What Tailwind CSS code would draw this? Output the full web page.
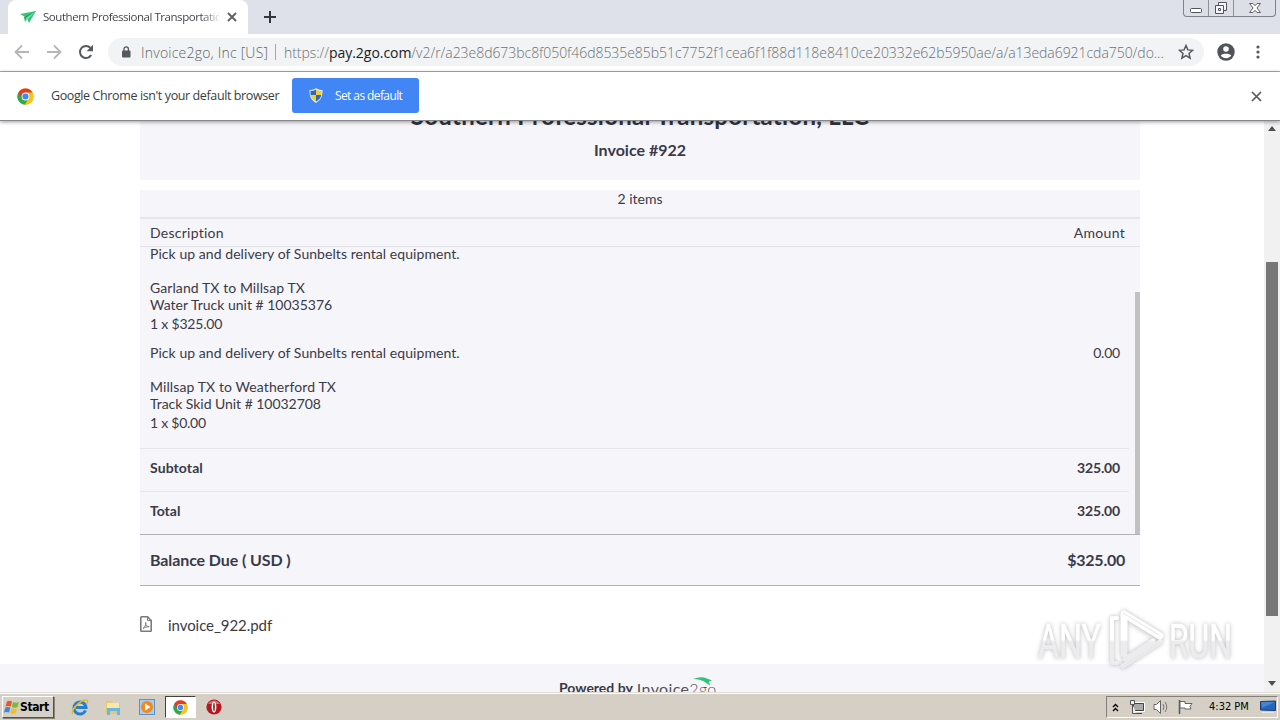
<!DOCTYPE html>
<html lang="en">
<head>
<meta charset="utf-8">
<title>Southern Professional Transportation</title>
<script src="https://cdn.jsdelivr.net/npm/@tailwindcss/browser@4"></script>
</head>
<body class="w-[1280px] h-[720px] overflow-hidden bg-white font-['Open_Sans',sans-serif] text-[#3c3d42]">
<svg class="hidden">
  <symbol id="chrome" viewBox="0 0 48 48">
    <circle cx="24" cy="24" r="23" fill="#fbc116"/>
    <path d="M24 24 4 12.6A23 23 0 0 0 22 47L33 29z" fill="#2da94f"/>
    <path d="M24 13h20A23 23 0 0 1 23 47L34 29z" fill="#fbc116"/>
    <path d="M4 12.5A23 23 0 0 1 44 13H24L14 29z" fill="#e33b2e"/>
    <circle cx="24" cy="24" r="11" fill="#fff"/><circle cx="24" cy="24" r="8.6" fill="#4587f3"/>
  </symbol>
</svg>
<div class="relative flex h-full flex-col">

  <!-- Tab strip -->
  <div class="flex h-[34px] shrink-0 justify-between bg-[#dee1e9]">
    <div class="flex">
      <div class="ml-2 flex h-[34px] w-[240px] items-center rounded-t-lg bg-white pl-3">
        <svg class="mr-[7px] h-4 w-4 shrink-0" viewBox="0 0 16 16"><path d="M0 5 16 2 9 14 7 9z" fill="#2fc878"/><path d="M16 2 4 8l1 5 2-4z" fill="#1fa862"/><path d="M16 2 6 9l-1 4 3-3z" fill="#7be0ab"/></svg>
        <div class="w-[176px] overflow-hidden whitespace-nowrap bg-linear-to-r from-[#3c4043] from-90% to-[#3c404322] bg-clip-text text-[11.5px] leading-[18px] tracking-[-0.46px] text-transparent">Southern Professional Transportatio</div>
        <svg class="ml-2 h-2.5 w-2.5 shrink-0" viewBox="0 0 10 10"><path d="M1 1l8 8M9 1L1 9" stroke="#5b5e63" stroke-width="1.8"/></svg>
      </div>
      <svg class="ml-4 mt-[11px] h-3 w-3" viewBox="0 0 12 12"><path d="M6 0v12M0 6h12" stroke="#33363b" stroke-width="2"/></svg>
    </div>
    <div class="mr-[4px] flex h-[17px] w-[93px] rounded-b-[4px] border border-t-0 border-[#7d828b] bg-[#dcdfe6] text-[#50545c]">
      <div class="flex w-[25px] justify-center border-r border-[#8d929b]"><svg class="h-4 w-4" viewBox="0 0 16 16"><rect x="2.500" y="8.500" width="11" height="4" rx="1" fill="#fff" stroke="#50545c"/></svg></div>
      <div class="flex w-[25px] justify-center border-r border-[#8d929b]"><svg class="h-4 w-4" viewBox="0 0 16 16"><g fill="#f4f5f8" stroke="#50545c"><path d="M5.500 2.500h8v8h-8z"/><path d="M2.500 5.500h8v8h-8z"/><path d="M5.500 8.500h2v2h-2z"/></g></svg></div>
      <div class="flex flex-1 justify-center"><svg class="h-4 w-4" viewBox="0 0 16 16"><path d="M2.500 3.500h3.500l2 2.200 2-2.200h3.500l-3.500 4.500 3.500 4.500H10L8 10.300 6 12.500H2.500L6 8z" fill="#fff" stroke="#60646c"/></svg></div>
    </div>
  </div>

  <!-- Toolbar -->
  <div class="flex h-[38px] shrink-0 items-center border-b border-[#a9abae] bg-white pb-px">
    <svg class="ml-[14px] h-4 w-4" viewBox="0 0 16 16"><path d="M15 8H2M8 1.500 1.500 8 8 14.500" fill="none" stroke="#b5b6b8" stroke-width="1.800"/></svg>
    <svg class="ml-4 h-4 w-4" viewBox="0 0 16 16"><path d="M1 8h13M8 1.500 14.500 8 8 14.500" fill="none" stroke="#b5b6b8" stroke-width="1.800"/></svg>
    <svg class="ml-4 h-4 w-4" viewBox="0 0 16 16"><path d="M13.200 11A6 6 0 1 1 12.500 4" fill="none" stroke="#56595e" stroke-width="2"/><path d="M15 .8v6.400H8.600z" fill="#56595e"/></svg>
    <div class="ml-[14px] flex h-7 w-[1096px] items-center whitespace-nowrap rounded-full bg-[#f1f3f4] text-[14px] text-[#6d7176]">
      <svg class="ml-[13px] h-3 w-[10px] shrink-0" viewBox="0 0 10 12"><rect x="1" y="4.500" width="8.500" height="7" rx="1" fill="#55585d"/><path d="M3 5V3a2.200 2.200 0 0 1 4.400 0v2" fill="none" stroke="#55585d" stroke-width="1.300"/></svg>
      <div class="ml-[10px] w-[128px] text-[#5f6368]"><span class="font-light tracking-[0.22px]">Invoice2go, Inc [US]</span></div>
      <div class="ml-[6px] mr-2 h-4 w-px bg-[#a4a7ab]"></div>
      <div class="w-[888px] font-light"><span class="tracking-[-0.045px]">https://<span class="font-normal text-[#202124]">pay.2go.com</span>/v2/r/a23e8d673bc8f050f46d8535e85b51c7752f1cea6f1f88d118e8410ce20332e62b5950ae/a/a13eda6921cda750/do...</span></div>
      <svg class="ml-[6px] h-4 w-4 shrink-0" viewBox="0 0 16 16"><path d="M8 1.500l1.900 4.400 4.700.4-3.600 3.100 1.100 4.700L8 11.600l-4.100 2.500L5 9.400 1.400 6.300l4.700-.4z" fill="none" stroke="#55585d" stroke-width="1.500"/></svg>
    </div>
    <svg class="ml-[13px] h-[18px] w-[18px]" viewBox="0 0 18 18"><circle cx="9" cy="9" r="8.700" fill="#505358"/><circle cx="9" cy="6" r="2.800" fill="#fff"/><path d="M3.800 12.600c1.200-2.400 9.200-2.400 10.400 0a6.300 6.300 0 0 1-10.400 0z" fill="#fff"/></svg>
    <svg class="ml-[21px] h-[14px] w-1" viewBox="0 0 4 14" fill="#55585d"><circle cx="2" cy="2" r="1.600"/><circle cx="2" cy="7" r="1.600"/><circle cx="2" cy="12" r="1.600"/></svg>
  </div>

  <!-- Default browser prompt -->
  <div class="z-10 flex h-[49px] shrink-0 items-center border-b border-[#85878a] bg-white pb-px shadow-[0_1px_4px_rgba(0,0,0,0.4)]">
    <svg class="ml-[17px] mt-px h-[17px] w-[17px]"><use href="#chrome"/></svg>
    <div class="ml-[17px] w-[241px] whitespace-nowrap pt-0.5 text-[12.5px] text-[#3a3d42]"><span class="tracking-[-0.39px]">Google Chrome isn't your default browser</span></div>
    <div class="flex h-[35px] w-[127px] items-center rounded-[3px] bg-[#4285f4] pl-[17px] text-[12px] text-white">
      <svg class="h-[15px] w-[14px]" viewBox="0 0 14 15"><path d="M7 0c2 1.500 4 2 6.500 2 .3 6-1.500 10-6.500 13C2 12 .2 8 .5 2 3 2 5 1.500 7 0z" fill="#e3e7ed"/><path d="M7 1.500V7H1.600L1.500 3Q5 3 7 1.500zM7 7h5.300Q11.500 11 7 13.600z" fill="#2769c4"/><path d="M7 1.500Q9 3 12.500 3l-.2 4H7zM7 7v6.600Q2.500 11 1.600 7z" fill="#f6cd2b"/></svg>
      <span class="ml-3 tracking-[-0.6px]">Set as default</span>
    </div>
    <svg class="ml-auto mr-[18px] mt-px h-[11px] w-[11px]" viewBox="0 0 11 11"><path d="M1 1l9 9M10 1l-9 9" stroke="#55585d" stroke-width="1.700"/></svg>
  </div>

  <!-- Page -->
  <div class="flex h-[571px] shrink-0 overflow-hidden">
    <main class="flex w-[1264px] flex-col overflow-hidden font-['Lato',sans-serif] text-[14px] text-[#3a3a48]">
      <section class="ml-[140px] flex h-[59px] w-[1000px] shrink-0 flex-col items-center justify-end overflow-hidden bg-[#f6f5fa] pb-5">
        <h1 class="shrink-0 whitespace-nowrap text-[24px] font-bold leading-[30px] tracking-[0.25px] text-[#33333f]">Southern Professional Transportation, LLC</h1>
        <h2 class="mt-[9px] shrink-0 text-[16px] font-bold leading-5">Invoice #922</h2>
      </section>
      <section class="ml-[140px] mt-[10px] flex w-[1000px] shrink-0 flex-col bg-[#f6f5fa]">
        <div class="h-[29px] border-b-2 border-[#e6e5ea] text-center leading-[18px]"><span>2 items</span></div>
        <div class="flex h-[28px] items-center justify-between border-b border-[#e2e1e6] pl-[10px] pr-[15px]"><span class="tracking-[0.26px]">Description</span><span class="tracking-[0.3px]">Amount</span></div>
        <div class="flex h-[287px]">
          <div class="w-[989px]">
            <div class="-mt-[2px] h-[99px] pl-[10px] pr-[9px] leading-[17px]">
              <p class="tracking-[0.06px]">Pick up and delivery of Sunbelts rental equipment.</p><p class="mt-[17px] tracking-[0.08px]">Garland TX to Millsap TX</p><p>Water Truck unit # 10035376</p><p class="mt-[2px] tracking-[-0.2px]">1 x $325.00</p>
            </div>
            <div class="flex h-[105px] justify-between border-b border-[#e6e5ea] pl-[10px] pr-[9px] leading-[17px]">
              <div><p class="tracking-[0.06px]">Pick up and delivery of Sunbelts rental equipment.</p><p class="mt-[17px] tracking-[0.1px]">Millsap TX to Weatherford TX</p><p class="tracking-[-0.04px]">Track Skid Unit # 10032708</p><p class="mt-[2px] tracking-[-0.24px]">1 x $0.00</p></div>
              <span class="tracking-[-0.2px]">0.00</span>
            </div>
            <div class="flex h-[43px] items-center justify-between border-b border-[#e6e5ea] pb-[5px] pl-[10px] pr-[9px] font-bold"><span class="tracking-[0.1px]">Subtotal</span><span class="tracking-[-0.15px]">325.00</span></div>
            <div class="flex h-[42px] items-center justify-between pb-[5px] pl-[10px] pr-[9px] font-bold"><span>Total</span><span class="tracking-[-0.15px]">325.00</span></div>
          </div>
          <div class="ml-auto mt-[45px] w-[5px] bg-[#c1c1c3]"></div>
        </div>
        <div class="flex h-[52px] items-center justify-between border-y border-[#b2b2b8] pl-[10px] pr-[15px] text-[16px] font-bold"><span class="tracking-[-0.1px]">Balance Due ( USD )</span><span class="tracking-[-0.25px]">$325.00</span></div>
      </section>
      <div class="ml-[140px] flex h-[78px] w-[1000px] shrink-0 items-center text-[15px]">
        <svg class="mb-[3px] mr-4 h-4 w-3" viewBox="0 0 12 16" fill="none" stroke="#7b7b7f"><path d="M1.500.8h6l3.700 3.700v10q0 .8-.8.8H1.500q-.7 0-.7-.8v-13q0-.7.7-.7z" stroke-width="1.600"/><path d="M7.500 1v3.500H11M3 12.500c1.500-1 2.700-3 2.700-6 0 3 1.300 4.200 3.500 4.200-2 0-4.200.4-6.200 1.800z"/></svg>
        <span class="tracking-[-0.06px]">invoice_922.pdf</span>
      </div>
      <footer class="flex h-[60px] w-full shrink-0 bg-[#f6f5fa] pl-[559px] pt-[13px] text-[14px]">
        <span class="font-bold">Powered by</span>
        <span class="relative ml-1 mt-px self-start text-[16px] leading-[22px] tracking-[0.35px] text-[#51525d]">Invoice<span class="font-light">2go</span>
          <svg class="absolute -top-px right-[4px] h-[9px] w-[20px]" viewBox="0 0 20 9"><path d="M0 2Q8-1 14 1.500l5 2-3 1 1 4-6-4Q7 2 0 2z" fill="#2fc47c"/></svg></span>
      </footer>
    </main>
    <div class="flex w-4 flex-col items-center bg-[#f1f1f1]">
      <svg class="mt-[5px] h-[5px] w-[8px]" viewBox="0 0 8 5"><path d="M4 0l4 5H0z" fill="#505050"/></svg>
      <div class="mt-[131px] h-[354px] w-3 bg-[#777]"></div>
      <svg class="mt-[65px] h-[5px] w-[8px]" viewBox="0 0 8 5"><path d="M4 5l4-5H0z" fill="#505050"/></svg>
    </div>
  </div>

  <!-- Taskbar -->
  <div class="flex h-7 shrink-0 items-center border-t border-[#dedbd5] bg-[#d5cfc6] pt-px shadow-[inset_0_1px_0_#fff] font-['DejaVu_Sans_Condensed','DejaVu_Sans',sans-serif]">
    <div class="ml-[2px] flex h-[22px] w-[52px] items-center border border-b-[#55524e] border-l-white border-r-[#55524e] border-t-white bg-[#d5cfc6] pl-px text-[12px] font-bold text-black shadow-[1px_1px_0_#88847c]">
      <svg class="h-4 w-4" viewBox="0 0 16 16"><path d="M3 2.500Q5.500 1 8 2.500L6.700 7.500Q4 6.300 1.500 7.500z" fill="#e8562c"/><path d="M9 3q3 1.500 6 0l-1.500 5q-3 1.300-5.700 0z" fill="#7bbb3c"/><path d="M1.200 8.700q2.500-1.200 5.200 0L5 13.500q-2.500-1.200-5 0z" fill="#3f87d9"/><path d="M7.500 9.200q2.700 1.300 5.600 0l-1.500 5q-3 1.200-5.500 0z" fill="#f6bd2b"/></svg><span class="tracking-[-0.4px]">Start</span>
    </div>
    <svg class="ml-[17px] h-[18px] w-[18px]" viewBox="0 0 18 18"><path d="M14.500 12.500A6 6 0 1 1 15 9.500H5" fill="none" stroke="#2380d0" stroke-width="3"/><path d="M2 16C-1 12 10 1 16 2q1.500 1-.5 4" fill="none" stroke="#e8b92b" stroke-width="1.500"/></svg>
    <svg class="ml-[15px] h-[18px] w-[18px]" viewBox="0 0 18 18"><path d="M2 3h6l1 2h7v11H2z" fill="#e8c86a"/><path d="M3 5h12v7H3z" fill="#f9e9a8"/><path d="M3 10h13v7h-3v-4H6v4H3z" fill="#66b5e8"/></svg>
    <svg class="ml-[16px] h-[18px] w-[18px]" viewBox="0 0 18 18"><rect x="1.500" y="1.500" width="15" height="15" fill="#a9cbee" stroke="#5c92cb"/><circle cx="9" cy="9" r="6" fill="#f08a1d"/><path d="M7 5.500v7l5.500-3.500z" fill="#fff"/></svg>
    <div class="ml-[9px] flex h-[22px] w-[31px] items-center justify-center border border-b-white border-l-[#44423e] border-r-white border-t-[#44423e] bg-white"><svg class="h-[15px] w-[15px]"><use href="#chrome"/></svg></div>
    <svg class="ml-[10px] h-4 w-4" viewBox="0 0 16 16"><circle cx="8" cy="8" r="7.600" fill="#b5171e"/><path d="M2 5a7 7 0 0 1 12 0z" fill="#dd6a6e"/><ellipse cx="8" cy="8" rx="2.400" ry="5.600" fill="#fff"/><ellipse cx="8" cy="8" rx=".8" ry="4.200" fill="#8a0f14"/></svg>
    <div class="ml-auto mr-[2px] flex h-[22px] w-[172px] items-center border border-b-white border-l-[#85817a] border-r-white border-t-[#85817a] text-[11px] text-black">
      <svg class="ml-[5px] h-[9px] w-[7px]" viewBox="0 0 7 9"><path d="M1 4l2.500-2.500L6 4M1 8l2.500-2.500L6 8" fill="none" stroke="#000" stroke-width="1.400"/></svg>
      <svg class="ml-[10px] h-4 w-4" viewBox="0 0 16 16"><path d="M4.500 3.500h11v9h-11z" fill="#999ea4" stroke="#fff"/><path d="M4.500 4.500h10v7h-10zM7 14.500h6" fill="#aaa" stroke="#444"/><path d="M1.500 1.500h4v4h-4zM3.500 5.500v9h4" fill="#eee" stroke="#555"/></svg>
      <svg class="ml-[8px] h-4 w-4" viewBox="0 0 16 16"><path d="M1 5.500h2.500l4-4v13l-4-4H1z" fill="#fff" stroke="#666"/><path d="M10 5q2 3 0 6M12 3q3.500 5 0 10" fill="none" stroke="#777"/></svg>
      <svg class="ml-[8px] h-4 w-4" viewBox="0 0 16 16"><path d="M2.500 1v14" stroke="#555" stroke-width="1.500"/><path d="M3 2.500h5v2h7l-2 3 1 2.500H8V9H3z" fill="#fff" stroke="#666"/></svg>
      <span class="ml-4 whitespace-nowrap">4:32 PM</span>
      <svg class="ml-auto mr-[1px] h-[14px] w-4" viewBox="0 0 16 14"><path d="M.5 1.500 15.500 1v9.500l-15-.5z" fill="#2565ba" stroke="#183c78"/><path d="M1 2h14L2 8z" fill="#4484d2"/><path d="M2 12.500h12" stroke="#e8e8e8"/></svg>
    </div>
  </div>

  <!-- Watermark -->
  <div class="absolute left-[1038px] top-[606px] z-20 h-[70px] w-[196px]">
    <svg class="h-full w-full drop-shadow-[0_0_2px_rgba(0,0,0,0.28)]" viewBox="0 0 196 70">
      <defs><linearGradient id="wm" gradientUnits="userSpaceOnUse" x1="0" y1="0" x2="0" y2="70"><stop offset=".48" stop-color="#fff"/><stop offset=".51" stop-color="#ececee"/></linearGradient></defs>
      <g fill="url(#wm)" stroke="url(#wm)" stroke-width=".6" font-family="Roboto, sans-serif" font-size="48"><text x="0" y="52" textLength="63" lengthAdjust="spacingAndGlyphs">ANY</text><text x="131" y="52" textLength="63" lengthAdjust="spacingAndGlyphs">RUN</text></g>
      <g fill="none" stroke="url(#wm)" stroke-linejoin="round" stroke-linecap="round">
        <path d="M79 12h-5v45h5" stroke-width="4"/>
        <path d="M86 48V8l36 22" stroke-width="7"/>
        <path d="M122 36 85 60M115 35 87 53" stroke-width="5"/>
      </g>
      <path d="M85 7l36 22M84 61l38-25M91 17l25 16" fill="none" stroke="#e6e6e8" stroke-width="1"/>
    </svg>
  </div>
</div>
</body>
</html>
